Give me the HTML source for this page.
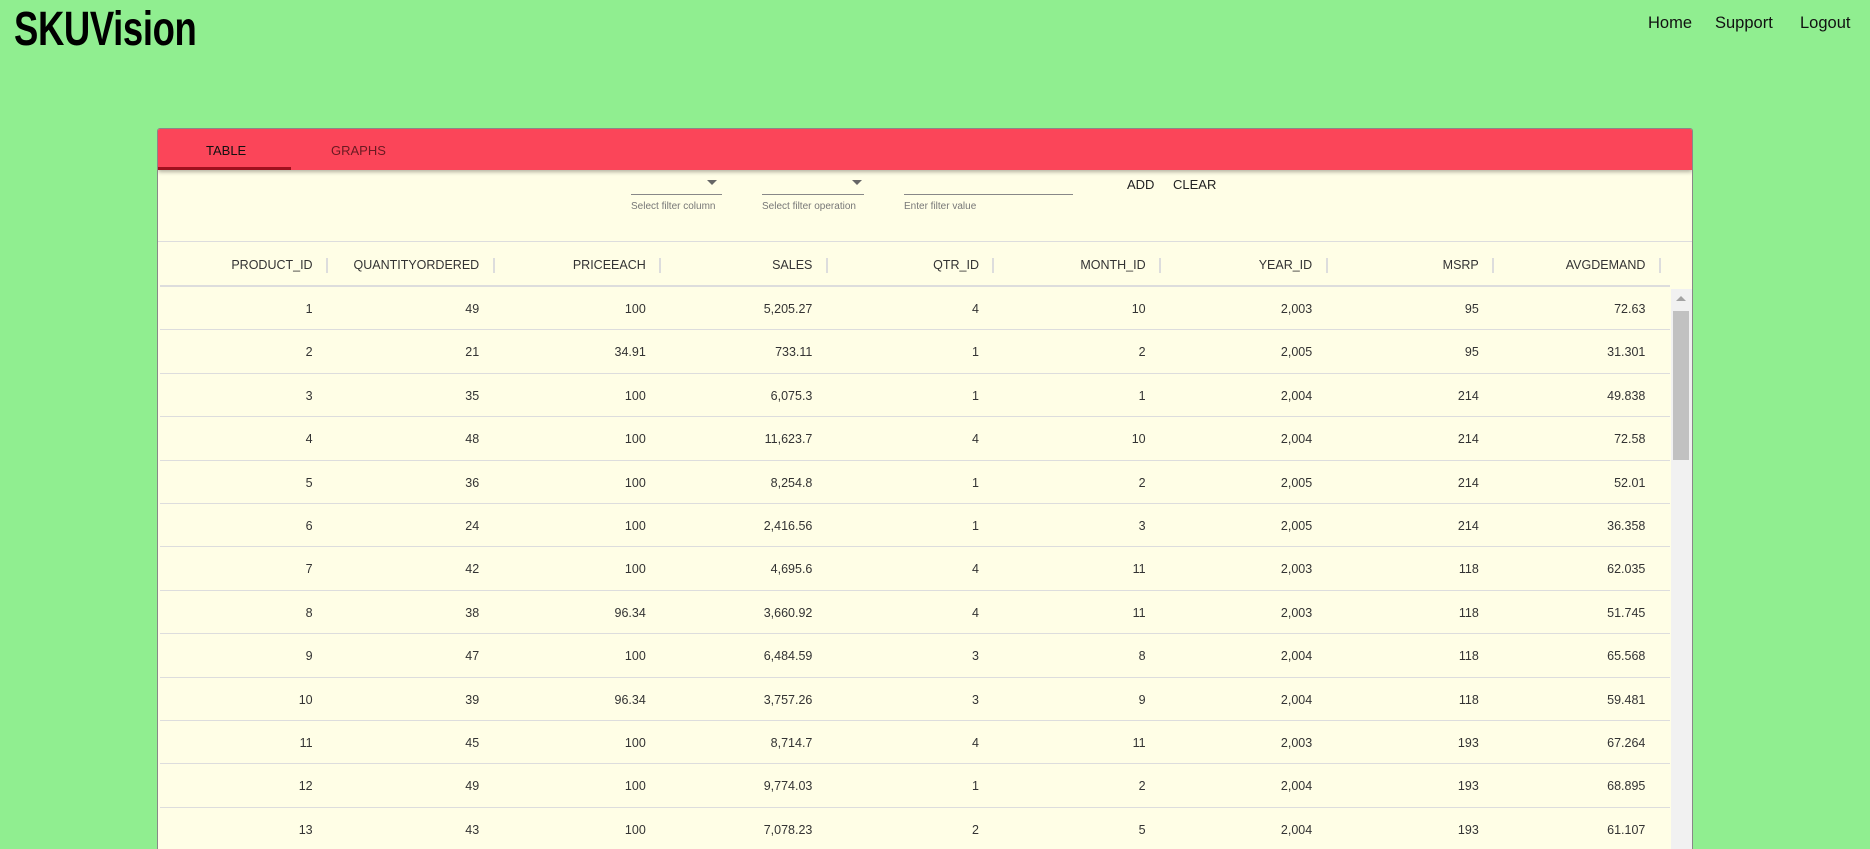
<!DOCTYPE html>
<html><head><meta charset="utf-8"><style>
*{margin:0;padding:0;box-sizing:border-box}
html{width:1870px;height:849px;overflow:hidden}
body{width:1870px;height:849px;background:#90ee90;font-family:"Liberation Sans",sans-serif;overflow:hidden;position:relative}
.logo{position:absolute;left:14px;top:2px;font-size:48px;font-weight:bold;color:#000;transform:scaleX(.76);transform-origin:left top;letter-spacing:-0.5px}
.nav{position:absolute;top:14px;font-size:16.5px;color:#111}
.card{position:absolute;left:157px;top:128px;width:1536px;height:721px;background:#fffee6;border:1px solid #888;border-bottom:none;border-radius:3px 3px 0 0;overflow:hidden}
.bar{position:absolute;left:0;top:0;width:100%;height:41px;background:#fb4559;box-shadow:0 2px 4px rgba(0,0,0,.3)}
.tab{position:absolute;top:14px;font-size:13px;color:#6a1a22}
.ul{position:absolute;left:0;top:38px;width:133px;height:3px;background:#a0101e}
.dd{position:absolute;top:65px;height:1px;background:#888}
.lbl{position:absolute;top:72px;font-size:10px;color:#777}
.arr{position:absolute;top:51px;width:0;height:0;border-left:5px solid transparent;border-right:5px solid transparent;border-top:5px solid #666}
.btn{position:absolute;top:48px;font-size:13px;color:#222}
.tline{position:absolute;left:0;top:112px;width:100%;height:1px;background:#ddd}
.hdr{position:absolute;left:2px;top:112px;width:1510px;height:46px;border-bottom:2px solid #ddd}
.hc{position:absolute;top:17px;width:166.6px;text-align:right;padding-right:14px;font-size:12.5px;color:#333}
.sep{position:absolute;top:17px;width:2px;height:15px;background:#ddd}
.row{position:absolute;left:2px;width:1510px;height:43.4px;border-bottom:1.5px solid #ddd}
.c{position:absolute;top:15px;width:166.6px;text-align:right;padding-right:14px;font-size:12.5px;color:#333}
.sb{position:absolute;left:1513px;top:160px;width:21px;height:600px;background:#f1f1f1}
.th{position:absolute;left:2px;top:22px;width:16px;height:149px;background:#c1c1c1}
.sa{position:absolute;left:5px;top:7px;border-left:5px solid transparent;border-right:5px solid transparent;border-bottom:5px solid #a3a3a3}
</style></head><body>
<div class="logo">SKUVision</div>
<div class="nav" style="left:1648px">Home</div>
<div class="nav" style="left:1715px">Support</div>
<div class="nav" style="left:1800px">Logout</div>
<div class="card">
<div class="bar"><div class="tab" style="left:48px;color:#111">TABLE</div><div class="tab" style="left:173px">GRAPHS</div><div class="ul"></div></div>
<div class="dd" style="left:473px;width:91px"></div><div class="arr" style="left:549px"></div><div class="lbl" style="left:473px">Select filter column</div>
<div class="dd" style="left:604px;width:102px"></div><div class="arr" style="left:694px"></div><div class="lbl" style="left:604px">Select filter operation</div>
<div class="dd" style="left:746px;width:169px"></div><div class="lbl" style="left:746px">Enter filter value</div>
<div class="btn" style="left:969px">ADD</div><div class="btn" style="left:1015px">CLEAR</div>
<div class="tline"></div>
<div class="hdr" id="h"></div>
<div id="rows"></div>
<div class="sb"><div class="sa"></div><div class="th"></div></div>
</div>
<script>
var H=["PRODUCT_ID","QUANTITYORDERED","PRICEEACH","SALES","QTR_ID","MONTH_ID","YEAR_ID","MSRP","AVGDEMAND"];
var D=[[1,49,100,"5,205.27",4,10,"2,003",95,72.63],[2,21,34.91,"733.11",1,2,"2,005",95,31.301],[3,35,100,"6,075.3",1,1,"2,004",214,49.838],[4,48,100,"11,623.7",4,10,"2,004",214,72.58],[5,36,100,"8,254.8",1,2,"2,005",214,52.01],[6,24,100,"2,416.56",1,3,"2,005",214,36.358],[7,42,100,"4,695.6",4,11,"2,003",118,62.035],[8,38,96.34,"3,660.92",4,11,"2,003",118,51.745],[9,47,100,"6,484.59",3,8,"2,004",118,65.568],[10,39,96.34,"3,757.26",3,9,"2,004",118,59.481],[11,45,100,"8,714.7",4,11,"2,003",193,67.264],[12,49,100,"9,774.03",1,2,"2,004",193,68.895],[13,43,100,"7,078.23",2,5,"2,004",193,61.107]];
var h="";for(var i=0;i<9;i++){h+='<div class="hc" style="left:'+(i*166.6)+'px">'+H[i]+'</div><div class="sep" style="left:'+(i*166.6+166)+'px"></div>';}
document.getElementById("h").innerHTML=h;
var r="";for(var j=0;j<D.length;j++){r+='<div class="row" style="top:'+(158+j*43.4)+'px">';for(var i=0;i<9;i++)r+='<div class="c" style="left:'+(i*166.6)+'px">'+D[j][i]+'</div>';r+='</div>';}
document.getElementById("rows").innerHTML=r;
</script>
</body></html>
